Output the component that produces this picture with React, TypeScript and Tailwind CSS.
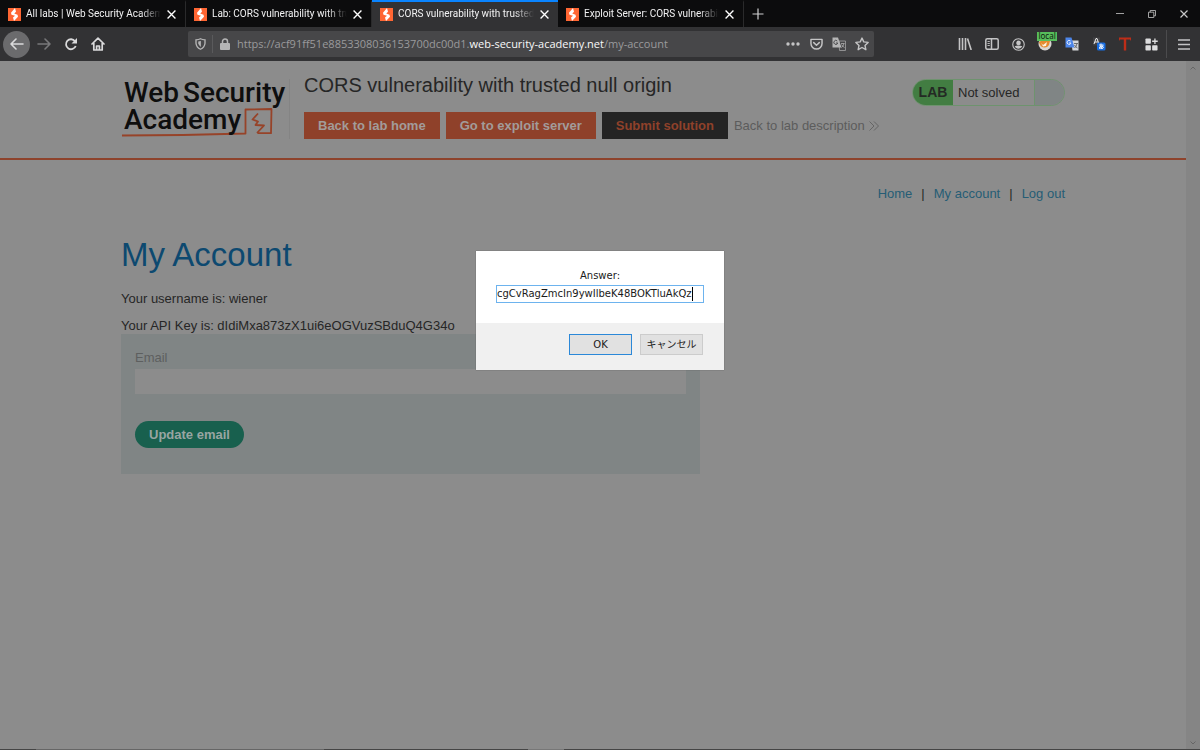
import type { ReactNode } from "react";

function BurpMark() {
  return (
    <svg viewBox="0 0 26 26" className="size-[13px] shrink-0" aria-hidden="true">
      <rect width="26" height="26" fill="#ff6633" />
      <path d="M14 0 L6 9.500 L7 13.500 L14 15.500 L10 19 L12 26 L20 17.500 L19 13.500 L12.500 11 L16 7.500 Z" fill="#fff" />
    </svg>
  );
}

function CloseIcon({ className = "size-2" }: { className?: string }) {
  return (
    <svg viewBox="0 0 8 8" className={className} fill="none" stroke="currentColor" strokeWidth="1.2" aria-hidden="true">
      <path d="M.5 .5 7.500 7.500M7.500 .5 .5 7.500" />
    </svg>
  );
}

function Tab({ title, active = false }: { title: string; active?: boolean }) {
  return (
    <div
      className={
        active
          ? "flex w-[186px] min-w-0 items-center border-t-2 border-[#0a84ff] bg-[#323234] pr-2 pl-2 pb-[1px]"
          : "flex w-[186px] min-w-0 items-center border-t-2 border-r border-t-[#0c0c0d] border-r-[#2a2a2b] pr-2 pl-2 pb-[1px]"
      }
    >
      <button role="tab" aria-selected={active} className="flex min-w-0 flex-1 items-center gap-[5px]">
        <BurpMark />
        <span className="min-w-0 flex-1 overflow-hidden text-left font-[Roboto,sans-serif] text-[10px] leading-4 whitespace-nowrap text-[#f2f2f3] [mask-image:linear-gradient(to_right,black_85%,transparent)]">
          {title}
        </span>
      </button>
      <button aria-label="Close tab" className="flex size-4 items-center justify-center pl-1 text-white">
        <CloseIcon className="size-[9px]" />
      </button>
    </div>
  );
}

function Tool({ label, children }: { label: string; children: ReactNode }) {
  return (
    <button aria-label={label} className="relative flex size-4 items-center justify-center text-[#c4c4c5]">
      {children}
    </button>
  );
}

function BrowserTabs() {
  return (
    <div className="flex h-[27px] bg-[#0c0c0d]">
      <div role="tablist" className="flex min-w-0">
        <Tab title="All labs | Web Security Academy" />
        <Tab title="Lab: CORS vulnerability with trusted null origin" />
        <Tab title="CORS vulnerability with trusted null origin" active />
        <Tab title="Exploit Server: CORS vulnerability" />
      </div>
      <button aria-label="New tab" className="flex w-7 items-center justify-center text-[#d0d0d1]">
        <svg viewBox="0 0 12 12" className="size-3" stroke="currentColor" strokeWidth="1.2">
          <path d="M6 .5V11.500M.5 6H11.500" />
        </svg>
      </button>
      <div className="ml-auto flex text-[#c8c8c8]">
        <button aria-label="Minimize" className="flex w-8 items-center justify-center">
          <svg viewBox="0 0 8 8" className="size-2" stroke="currentColor" strokeWidth=".8"><path d="M0 3.500H8" /></svg>
        </button>
        <button aria-label="Restore" className="flex w-8 items-center justify-center">
          <svg viewBox="0 0 8 8" className="size-2" fill="none" stroke="currentColor" strokeWidth=".8">
            <path d="M.5 2.200H5.800V7.500H.5ZM2.200 2.200V.5H7.500V5.800H5.800" />
          </svg>
        </button>
        <button aria-label="Close window" className="flex w-8 items-center justify-center">
          <CloseIcon />
        </button>
      </div>
    </div>
  );
}

function UrlBar() {
  return (
    <div className="flex h-[26px] min-w-0 flex-1 items-center rounded-[2px] bg-[#474749] pr-1 pl-[5px] text-[#b5b5b6]">
      <button aria-label="Tracking protection" className="flex h-[18px] w-[19px] items-center pl-[2px]">
        <svg viewBox="0 0 14 16" className="h-3 w-[11px]" fill="none" stroke="currentColor" strokeWidth="1.800">
          <path d="M1 2.500Q4.500 2.300 7 1Q9.500 2.300 13 2.500V7Q12.500 12.500 7 15Q1.500 12.500 1 7Z" />
          <path d="M7.500 4V12Q4.500 10 4 7V4.500Z" fill="currentColor" stroke="none" />
        </svg>
      </button>
      <span className="h-[18px] w-px bg-[#5a5a5c]" />
      <button aria-label="Site information" className="flex w-[23px] items-center justify-center">
        <svg viewBox="0 0 10 12" className="h-3 w-[10px]">
          <path d="M2.500 6V3.500a2.500 2.500 0 0 1 5 0V6" fill="none" stroke="currentColor" strokeWidth="1.500" />
          <rect y="5" width="10" height="7" rx="1" fill="currentColor" />
        </svg>
      </button>
      <div role="textbox" aria-label="Address" className="min-w-0 flex-1 overflow-hidden pl-px font-['Open_Sans',sans-serif] text-[11px] leading-4 whitespace-nowrap text-[#9a9a9c]">
        https://acf91ff51e8853308036153700dc00d1.<span className="text-[#f9f9fa]">web-security-academy.net</span>/my-account
      </div>
      <div className="flex gap-[7px]">
        <Tool label="Page actions">
          <svg viewBox="0 0 14 4" className="h-1 w-[14px]" fill="currentColor">
            <circle cx="2" cy="2" r="1.700" /><circle cx="7" cy="2" r="1.700" /><circle cx="12" cy="2" r="1.700" />
          </svg>
        </Tool>
        <Tool label="Save to Pocket">
          <svg viewBox="0 0 14 13" className="h-[12px] w-[13px]" fill="none" stroke="currentColor" strokeWidth="1.600" strokeLinecap="round" strokeLinejoin="round">
            <path d="M1 1.500H13V6A6 6 0 0 1 1 6ZM4 5 7 7.800 10 5" />
          </svg>
        </Tool>
        <Tool label="Translate page">
          <svg viewBox="0 0 28 28" className="size-[14px]">
            <path d="M14 8H27V27H15Z" fill="#474749" stroke="#98989a" strokeWidth="1.800" />
            <path d="M1 1H12L19 21H1Z" fill="#b5b5b6" />
            <path d="M10.500 8A4 4 0 1 0 11.500 12H8" fill="none" stroke="#4b4b4d" strokeWidth="2" />
            <path d="M18 13H25M24 13Q23 18 19 21M19 15Q21 19 25 21" fill="none" stroke="#b5b5b6" strokeWidth="1.500" />
          </svg>
        </Tool>
        <Tool label="Bookmark this page">
          <svg viewBox="0 0 16 16" className="size-[14px]" fill="none" stroke="currentColor" strokeWidth="1.600" strokeLinejoin="round">
            <path d="M8 1.200 10 5.600 15 6.200 11.400 9.600 12.400 14.500 8 12 3.600 14.500 4.600 9.600 1 6.200 6 5.600Z" />
          </svg>
        </Tool>
      </div>
    </div>
  );
}

function Toolbar() {
  return (
    <div className="flex h-[34px] items-center bg-[#323234]">
      <div className="flex w-[188px] shrink-0 items-center pl-[3px] text-[#dadadb]">
        <button aria-label="Back" className="flex size-[27px] items-center justify-center rounded-full bg-[#6b6b6d]">
          <svg viewBox="0 0 14 12" className="h-3 w-[14px]" fill="none" stroke="currentColor" strokeWidth="1.600" strokeLinecap="round" strokeLinejoin="round"><path d="M6 1 1 6 6 11M1 6H13" /></svg>
        </button>
        <button aria-label="Forward" className="flex size-[27px] items-center justify-center text-[#78787a]">
          <svg viewBox="0 0 14 12" className="h-3 w-[14px]" fill="none" stroke="currentColor" strokeWidth="1.600" strokeLinecap="round" strokeLinejoin="round"><path d="M8 1 13 6 8 11M13 6H1" /></svg>
        </button>
        <button aria-label="Reload" className="flex size-[27px] items-center justify-center">
          <svg viewBox="0 0 14 14" className="size-[14px]" fill="none" stroke="currentColor" strokeWidth="1.800">
            <path d="M11 4.200A5 5 0 1 0 11.700 9" />
            <path d="M13 1V6.500H7.500Z" fill="currentColor" stroke="none" />
          </svg>
        </button>
        <button aria-label="Home" className="flex size-[27px] items-center justify-center">
          <svg viewBox="0 0 14 14" className="size-[14px]" fill="none" stroke="currentColor" strokeWidth="1.700" strokeLinejoin="round" strokeLinecap="round">
            <path d="M1 7 7 1.200 13 7M2.800 6V13H11.200V6M5.600 13V9H8.400V13" />
          </svg>
        </button>
      </div>
      <UrlBar />
      <div className="flex w-[326px] shrink-0 items-center pl-[83px]">
        <div className="flex w-[203px] items-center justify-between">
          <Tool label="Library">
            <svg viewBox="0 0 14 12" className="h-3 w-[14px]" fill="none" stroke="currentColor" strokeWidth="1.600"><path d="M1.500 0V12M4.500 0V12M7.500 0V12M9.500 .5 13.200 12" /></svg>
          </Tool>
          <Tool label="Sidebars">
            <svg viewBox="0 0 14 12" className="h-3 w-[14px]" fill="none" stroke="currentColor" strokeWidth="1.500"><rect x=".8" y=".8" width="12.400" height="10.400" rx="1.500" /><path d="M6.500 1V11" /><path d="M2.500 3.500H4.800M2.500 5.500H4.800M2.500 7.500H4.800" strokeWidth=".9" /></svg>
          </Tool>
          <Tool label="Account">
            <svg viewBox="0 0 14 14" className="size-[13px]" fill="none" stroke="currentColor" strokeWidth="1.200"><circle cx="7" cy="7" r="6.200" /><circle cx="7" cy="5.300" r="2.500" fill="currentColor" stroke="none" /><path d="M2.800 9Q7 7 11.200 9Q9.800 11.600 7 11.600T2.800 9Z" fill="currentColor" stroke="none" /></svg>
          </Tool>
          <Tool label="FoxyProxy">
            <svg viewBox="0 0 14 14" className="size-[14px]"><circle cx="7" cy="7" r="6.500" fill="#d9d6d2" /><path d="M1 5Q7 1 12 4L11 8Q9 11 6 10.500Q2 10 1 5Z" fill="#e58a2d" /><path d="M3 6 5 8 9 5 8 9 5 9.500Z" fill="#fff0da" /></svg>
            <span className="absolute -top-1 left-0 h-[9px] w-[20px] bg-[#57bd5b] text-center text-[8px] leading-[8px] text-[#102411]">local</span>
          </Tool>
          <Tool label="Google Translate">
            <svg viewBox="0 0 28 28" className="size-[14px]">
              <path d="M12 7H27V27H15Z" fill="#d5d7da" /><path d="M1 1H13L19 21H1Z" fill="#4d86ea" />
              <path d="M11 8A4 4 0 1 0 12 12H8" fill="none" stroke="#dfe9ff" strokeWidth="2" /><path d="M18 13H26M24 13Q23 19 19 22M19 16Q21 20 25 22" fill="none" stroke="#6a6d70" strokeWidth="2" />
            </svg>
          </Tool>
          <Tool label="Text translation">
            <svg viewBox="0 0 28 28" className="size-[14px]">
              <path d="M2 1H16V12H11V17H2Z" fill="#414144" /><path d="M4 14 8 3H10L14 14M6 10H12" fill="none" stroke="#eee" strokeWidth="2" />
              <rect x="10" y="11" width="17" height="16" rx="3" fill="#176ce0" /><path d="M14 16H23M18 13Q17 19 19 24M22 17Q19 23 15 23Q13 19 20 18Q26 19 20 24" fill="none" stroke="#fff" strokeWidth="1.800" />
            </svg>
          </Tool>
          <Tool label="Text tool">
            <svg viewBox="0 0 14 14" className="size-[14px]"><path d="M1 .5H13V4L12 2.500H8.200V13.500H5.800V2.500H2L1 4Z" fill="#bd2d18" /></svg>
          </Tool>
          <Tool label="Extensions">
            <svg viewBox="0 0 14 14" className="size-[13px]" fill="#dcdcdd"><rect x=".5" y=".5" width="5.800" height="5.800" rx=".8" /><rect x=".5" y="7.700" width="5.800" height="5.800" rx=".8" /><rect x="7.700" y="7.700" width="5.800" height="5.800" rx=".8" /><path d="M10 .5H11.400V2.800H13.700V4.200H11.400V6.500H10V4.200H7.700V2.800H10Z" /></svg>
          </Tool>
        </div>
        <div className="ml-[6px] flex h-7 items-center border-l border-[#4b4b4d] pl-[9px]">
          <Tool label="Menu">
            <svg viewBox="0 0 12 11" className="h-[11px] w-3" stroke="currentColor" strokeWidth="1.500"><path d="M0 1H12M0 5.500H12M0 10H12" /></svg>
          </Tool>
        </div>
      </div>
    </div>
  );
}

function AcademyLogo() {
  return (
    <a href="#" aria-label="Web Security Academy" className="relative h-[60px] w-[169px] shrink-0 border-r border-[#848484] pl-[3px] font-[Roboto,sans-serif] text-[28px] leading-[27px] font-medium text-[#0e0e0e]">
      <svg viewBox="0 0 168 60" className="absolute top-0 left-0 h-[60px] w-[168px]" fill="none" stroke="#974329" strokeWidth="1.800" strokeLinejoin="round">
        <path d="M1 56.500 62 56 124.500 54.500V30.500L150.500 30 150 54.200H136.500" />
        <path d="M137 34.500 131.500 40.500 137 42.500 134.500 46 143 46.500 136 54" />
      </svg>
      <span className="relative flex gap-1"><span>Web</span><span>Security</span></span>
      <span className="relative block">Academy</span>
    </a>
  );
}

function LabHeader() {
  const action = "flex h-[27px] items-center px-[14px] text-[13px] font-bold whitespace-nowrap";
  return (
    <header className="border-b-2 border-[#8e432c]">
      <div className="mx-auto flex min-h-[97px] max-w-[944px] items-start pt-[18px]">
        <AcademyLogo />
        <div className="ml-[14px] min-w-0">
          <h2 className="-mt-[6px] text-[20px] leading-6 text-[#262626]">CORS vulnerability with trusted null origin</h2>
          <div className="mt-[15px] flex items-center gap-[6px]">
            <a href="#" className={`${action} bg-[#8f412a] text-[#a29c9a]`}>Back to lab home</a>
            <a href="#" className={`${action} bg-[#8f412a] text-[#a29c9a]`}>Go to exploit server</a>
            <button className={`${action} bg-[#242424] text-[#8f412a]`}>Submit solution</button>
            <a href="#" className="flex items-center gap-1 text-[13px] whitespace-nowrap text-[#5c5c5c]">
              Back to lab description
              <svg viewBox="0 0 10 10" className="size-[10px]" fill="none" stroke="currentColor" strokeWidth=".8"><path d="M.5 .5 5 5 .5 9.500M5 .5 9.500 5 5 9.500" /></svg>
            </a>
          </div>
        </div>
        <div className="ml-auto flex h-[27px] w-[153px] shrink-0 overflow-hidden rounded-full border border-[#6e936e] bg-[#8c8c8c] text-[13px] leading-[25px]">
          <span className="w-10 bg-[#427d42] text-center text-[14px] font-bold text-[#242a24]">LAB</span>
          <span className="flex-1 pl-[5px] text-[#262626]">Not solved</span>
          <span className="w-[30px] border-l border-[#6e936e] bg-[#808585]" />
        </div>
      </div>
    </header>
  );
}

function AccountPage() {
  return (
    <main className="mx-auto max-w-[944px] text-[13px] leading-4 text-[#262626]">
      <nav className="flex justify-end gap-[9px] pt-[26px]">
        <a href="#" className="text-[#265d75]">Home</a>
        <span>|</span>
        <a href="#" className="text-[#265d75]">My account</a>
        <span>|</span>
        <a href="#" className="text-[#265d75]">Log out</a>
      </nav>
      <h1 className="mt-[33px] text-[33px] leading-10 text-[#0d4970]">My Account</h1>
      <p className="mt-4">Your username is: wiener</p>
      <p className="mt-[11px]">Your API Key is: dIdiMxa873zX1ui6eOGVuzSBduQ4G34o</p>
      <form className="max-w-[579px] bg-[#808585] px-[14px] pt-4 pb-[26px]" onSubmit={(e) => e.preventDefault()}>
        <label htmlFor="email" className="block text-[#5d5f5f]">Email</label>
        <input id="email" type="email" className="mt-[3px] block h-[25px] w-full bg-[#8c8c8c] px-2 outline-none" />
        <button className="mt-[27px] flex h-[27px] items-center rounded-full bg-[#18604e] px-[14px] font-bold text-[#98a5a2]">Update email</button>
      </form>
    </main>
  );
}

function AnswerDialog() {
  return (
    <div className="absolute inset-0 flex items-start justify-center pt-[190px]">
      <div role="dialog" aria-label="Answer" className="w-[248px] bg-[#f0f0f0] font-['DejaVu_Sans','Noto_Sans_CJK_JP',sans-serif] text-[10px] leading-4 text-[#1a1a1a] shadow-[0_0_1px_#555]">
        <div className="bg-white px-5 pt-[17px] pb-5">
          <label htmlFor="answer" className="block text-center">Answer:</label>
          <div className="mt-px flex h-[18px] items-center border border-[#6db3ee] bg-white">
            <input id="answer" defaultValue="cgCvRagZmcIn9ywIlbeK48BOKTluAkQz" className="max-w-full [field-sizing:content] outline-none" />
            <span className="h-[14px] w-px bg-black" />
          </div>
        </div>
        <div className="flex justify-end gap-2 pt-[11px] pr-[21px] pb-[15px]">
          <button className="h-[21px] w-[63px] border border-[#2b88d8] bg-[#e1e1e1] text-[10px] leading-4">OK</button>
          <button className="h-[21px] w-[63px] border border-[#cccccc] bg-[#e1e1e1] text-[10px] leading-4">キャンセル</button>
        </div>
      </div>
    </div>
  );
}

export default function App() {
  return (
    <div className="flex min-h-screen flex-col bg-[#8c8c8c] font-['Noto_Sans','Noto_Sans_CJK_JP',sans-serif]">
      <BrowserTabs />
      <Toolbar />
      <div className="relative flex flex-1 font-['Liberation_Sans',Arial,sans-serif]">
        <div className="min-w-0 flex-1">
          <LabHeader />
          <AccountPage />
        </div>
        <div className="flex w-[14px] flex-col items-center justify-between bg-[#858585] pt-[5px] pb-1 text-[#666]">
          <svg viewBox="0 0 6 4" className="h-1 w-[6px]" fill="none" stroke="currentColor"><path d="M.5 3.500 3 1 5.500 3.500" /></svg>
          <svg viewBox="0 0 6 4" className="h-1 w-[6px]" fill="none" stroke="currentColor"><path d="M.5 .5 3 3 5.500 .5" /></svg>
        </div>
        <AnswerDialog />
      </div>
      <div className="flex h-px bg-[#454545]">
        <span className="w-[3%]" />
        <span className="w-[24%] bg-[#666]" />
        <span className="w-[17%]" />
        <span className="w-[3%] bg-[#777]" />
      </div>
    </div>
  );
}
